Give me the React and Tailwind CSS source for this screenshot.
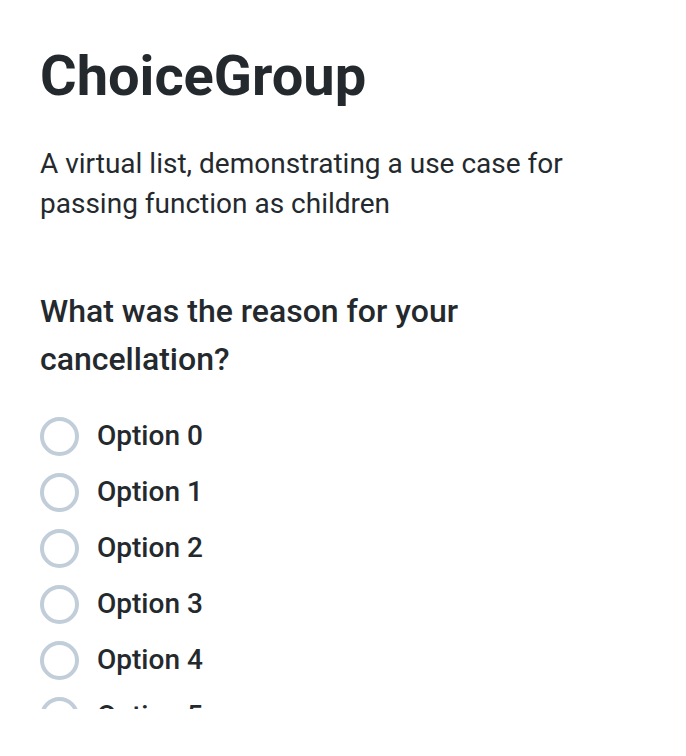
import React from "react";

const options = Array.from({ length: 8 }, (_, i) => `Option ${i}`);

export default function App() {
  return (
    <div className="min-h-screen bg-white text-[#24292e] px-10 pt-[40px]" style={{ fontFamily: "Roboto, 'Liberation Sans', sans-serif" }}>
      <h1 className="text-[56px] font-bold leading-[72px] m-0">ChoiceGroup</h1>
      <p className="mt-[32px] text-[28px] leading-[40px] max-w-[580px]">
        A virtual list, demonstrating a use case for passing function as children
      </p>
      <h2 className="mt-[63px] text-[32px] font-medium leading-[48px] max-w-[480px]">
        What was the reason for your cancellation?
      </h2>
      <div className="mt-[25px] h-[301px] overflow-hidden">
        {options.map((o) => (
          <label key={o} className="flex items-center h-[56px] gap-[18px]">
            <span className="w-[39px] h-[39px] rounded-full border-[4px] border-[#c1cdd9] shrink-0" />
            <span className="text-[28px] font-medium">{o}</span>
          </label>
        ))}
      </div>
    </div>
  );
}
